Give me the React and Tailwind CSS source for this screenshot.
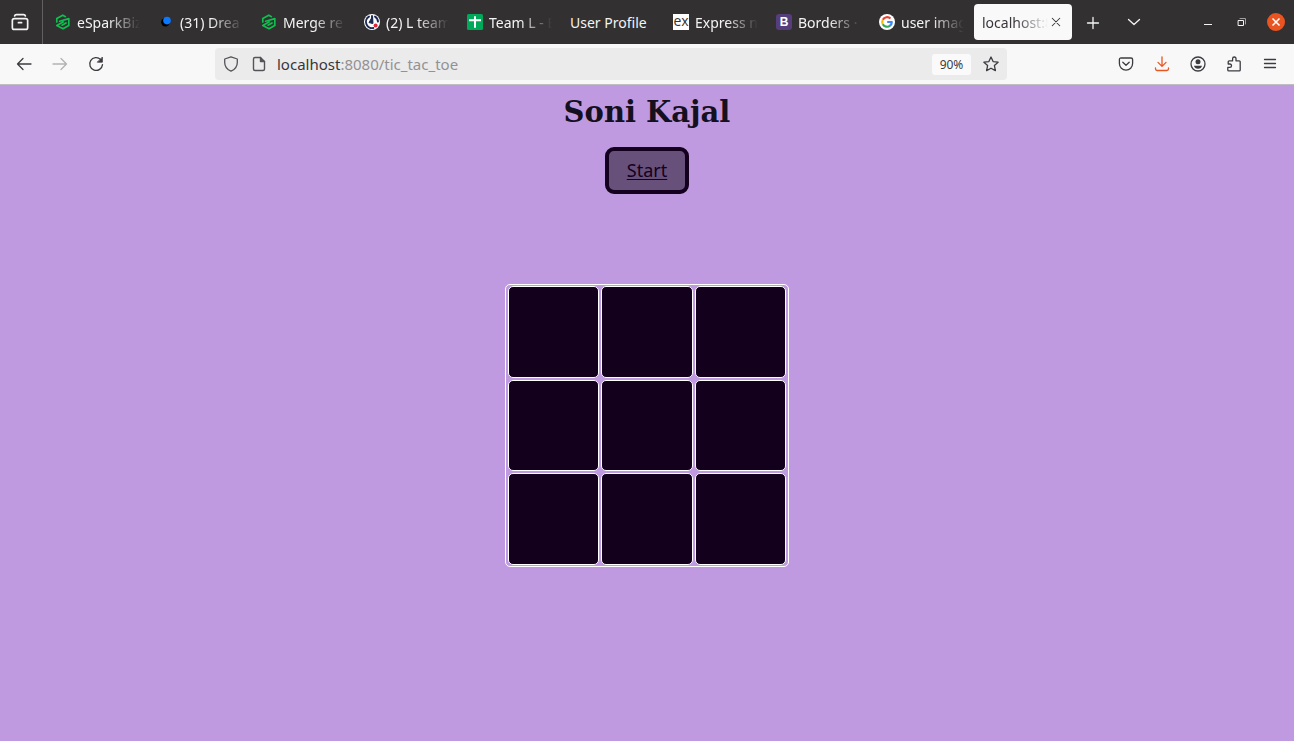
import React from "react";

const stroke = { fill: "none", stroke: "currentColor", strokeLinecap: "round", strokeLinejoin: "round" };

function Icon({ size = 16, width = 1.3, children, className = "" }) {
  return (
    <svg width={size} height={size} viewBox="0 0 16 16" strokeWidth={width} {...stroke} className={"block shrink-0 " + className} aria-hidden="true">
      {children}
    </svg>
  );
}

const HexMark = () => (
  <Icon width={1.7} className="text-[#0fbf4f]">
    <path d="M1.800 8V4.600L7.800 1.200l2.600 1.500M4.600 7.200 13.800 4.600v6.800L8 14.800l-6.200-3.400 6.600-3.600M7 11.200l4-2.200" />
  </Icon>
);

const BlueDot = () => (
  <Icon>
    <circle cx="7.4" cy="8.2" r="4.2" fill="#000" stroke="none" />
    <circle cx="9" cy="6.6" r="3.8" fill="#0a78ff" stroke="none" />
  </Icon>
);

const TeamMark = () => (
  <Icon>
    <circle cx="8" cy="8" r="8" fill="#fff" stroke="none" />
    <path d="M5 2.6A6.2 6.2 0 0 0 9.4 14M8 2v6.4M11 2.6A6.2 6.2 0 0 1 14 7.6" stroke="#1d2b53" strokeWidth="1.9" />
    <path d="M8.4 2.6 5 8.6l3.6.8z" fill="#1d2b53" stroke="#1d2b53" strokeWidth="1" />
    <circle cx="11.6" cy="11.4" r="2" fill="#e0283c" stroke="none" />
  </Icon>
);

const SheetMark = () => (
  <Icon>
    <rect width="16" height="16" rx="1.5" fill="#00a859" stroke="none" />
    <path d="M2 6.2h12M8 2.2v11.6" stroke="#fff" strokeWidth="2" strokeLinecap="butt" />
  </Icon>
);

const ExpressMark = () => (
  <span className="flex size-4 shrink-0 items-center justify-center bg-white pb-0.5 font-['Open_Sans',sans-serif] text-[14px] leading-4 text-[#333]">ex</span>
);

const BootstrapMark = () => (
  <span className="flex size-4 shrink-0 items-center justify-center rounded-[3px] bg-[#563d7c] font-['Liberation_Sans',sans-serif] text-[12px] font-bold leading-4 text-white">B</span>
);

const GoogleMark = () => (
  <Icon>
    <circle cx="8" cy="8" r="8" fill="#fff" stroke="none" />
    <g strokeWidth="2.2" strokeLinecap="butt">
      <path d="M11.5 4.6A4.8 4.8 0 0 0 3.8 5.8" stroke="#ea4335" />
      <path d="M3.8 5.7a4.8 4.8 0 0 0 0 4.6" stroke="#fbbc05" />
      <path d="M3.8 10.2a4.8 4.8 0 0 0 7.3 1.4" stroke="#34a853" />
      <path d="M11 11.7A4.8 4.8 0 0 0 12.8 8H8.2" stroke="#4285f4" />
    </g>
  </Icon>
);

const tabs = [
  { label: "eSparkBiz", mark: HexMark },
  { label: "(31) Drea", mark: BlueDot },
  { label: "Merge re", mark: HexMark },
  { label: "(2) L team", mark: TeamMark },
  { label: "Team L - E", mark: SheetMark },
  { label: "User Profile" },
  { label: "Express n", mark: ExpressMark },
  { label: "Borders ·", mark: BootstrapMark },
  { label: "user imag", mark: GoogleMark },
];

const fade = "[mask-image:linear-gradient(to_left,transparent,black_32px)]";

function Tab({ label, mark: Mark }) {
  return (
    <button type="button" role="tab" aria-selected="false" className="flex h-9 w-[99px] min-w-0 items-center gap-1.5 pl-2 pr-1.5 text-[#f4f4f4]">
      {Mark && <Mark />}
      <span className={"min-w-0 flex-1 overflow-hidden whitespace-nowrap pt-0.5 text-left " + (Mark ? fade : "")}>{label}</span>
    </button>
  );
}

function TabStrip() {
  return (
    <div className="flex h-11 items-center bg-[#333031] text-[#f4f4f4]">
      <button type="button" aria-label="Recent tabs" className="flex h-11 w-[43px] shrink-0 items-center justify-center border-r border-[#626061] pr-0.5">
        <Icon width={1.5} size={18}>
          <rect x="1.2" y="5" width="13.6" height="9.6" rx="1.8" />
          <path d="M3.2 2.6q.3-1.2 1.6-1.2h6.4q1.3 0 1.6 1.2M6.6 8.6h2.8" />
        </Icon>
      </button>
      <div role="tablist" className="flex min-w-0 gap-1 pl-1">
        {tabs.map((t) => <Tab key={t.label} {...t} />)}
        <div className="flex h-9 w-[98px] min-w-0 items-center gap-0.5 rounded bg-[#f9f9fa] pl-2 pr-2.5 text-[#38363a]">
          <button type="button" role="tab" aria-selected="true" className={"min-w-0 flex-1 overflow-hidden whitespace-nowrap pt-0.5 text-left " + fade}>localhost:8</button>
          <button type="button" aria-label="Close tab" className="shrink-0">
            <Icon size={12} width={1.4}><path d="m3 3 10 10M13 3 3 13" /></Icon>
          </button>
        </div>
      </div>
      <button type="button" aria-label="New tab" className="flex h-9 w-[41px] shrink-0 items-center justify-center pt-px">
        <Icon><path d="M8 2.5v11M2.5 8h11" /></Icon>
      </button>
      <button type="button" aria-label="List all tabs" className="flex h-9 w-[41px] shrink-0 items-center justify-center">
        <Icon><path d="m2.5 5.5 5.5 5 5.5-5" /></Icon>
      </button>
      <div className="ml-auto flex shrink-0 pr-px">
        <button type="button" aria-label="Minimize" className="flex h-9 w-[34px] items-center justify-center">
          <Icon width={1}><path d="M4 10.5h8" strokeLinecap="butt" /></Icon>
        </button>
        <button type="button" aria-label="Restore" className="flex h-9 w-[34px] items-center justify-center">
          <Icon width={1}>
            <path d="M6 4.5h5.5V10" stroke="#a0a0a0" />
            <rect x="4.5" y="6.5" width="5" height="5" />
          </Icon>
        </button>
        <button type="button" aria-label="Close window" className="flex h-9 w-[34px] items-center justify-center">
          <span className="flex size-[18px] items-center justify-center rounded-full bg-[#e95420] text-white">
            <Icon size={14} width={1.8}><path d="m4 4 8 8M12 4l-8 8" strokeLinecap="butt" /></Icon>
          </span>
        </button>
      </div>
    </div>
  );
}

function ToolButton({ label, className = "", children, ...rest }) {
  return (
    <button type="button" aria-label={label} className={"flex h-9 w-9 shrink-0 items-center justify-center " + className} {...rest}>
      {children}
    </button>
  );
}

function Toolbar() {
  return (
    <div className="grid h-[41px] grid-cols-[215fr_792fr_287fr] items-center border-b border-[#bfbdc2] bg-[#f8f8f8] text-[#3d3b40]">
      <div className="flex pl-1.5">
        <ToolButton label="Back"><Icon><path d="M15 8H1.5M7 2.5 1.5 8 7 13.5" /></Icon></ToolButton>
        <ToolButton label="Forward" disabled className="text-[#b3b3b3]"><Icon><path d="M1 8h13.5M9 2.5 14.5 8 9 13.5" /></Icon></ToolButton>
        <ToolButton label="Reload">
          <Icon>
            <path d="M12.6 3.4A6.4 6.4 0 1 0 14.5 8.6" />
            <path d="M14.4 1.4v4.8H9.6z" fill="currentColor" strokeWidth="0.8" />
          </Icon>
        </ToolButton>
      </div>
      <div className="flex h-8 min-w-0 items-center rounded bg-[#ebebeb] px-2">
        <button type="button" aria-label="Tracking protection" className="text-[#55535a]">
          <Icon><path d="M8 .8 14.3 3v3.4c0 3.6-2.4 7-6.3 8.8-3.9-1.8-6.3-5.2-6.3-8.8V3z" /></Icon>
        </button>
        <button type="button" aria-label="Site information" className="ml-3 text-[#55535a]">
          <Icon width={1.4}>
            <path d="M9.5 1.5H4Q2.5 1.5 2.5 3v10q0 1.5 1.5 1.5h8q1.5 0 1.5-1.5V5.5z" />
            <path d="M9.5 1.5v4h4" fill="currentColor" />
          </Icon>
        </button>
        <a href="http://localhost:8080/tic_tac_toe" className="ml-2.5 flex-1 truncate text-[15px] leading-5 text-[#38363a]">
          localhost<span className="text-[#939195]">:8080/tic_tac_toe</span>
        </a>
        <button type="button" aria-label="Reset zoom level" className="h-[21px] w-[39px] rounded-[3px] bg-[#fafafa] pt-px text-center text-[12px] leading-5">90%</button>
        <button type="button" aria-label="Bookmark this page" className="ml-3">
          <Icon><path d="m8 1 2.1 4.6 5 .6-3.7 3.4 1 5L8 12.2l-4.400 2.400 1-5L.9 6.200l5-.6z" /></Icon>
        </button>
      </div>
      <div className="flex justify-end pr-1.5">
        <ToolButton label="Save to Pocket">
          <Icon width={1.3}><path d="M3 2h10q1.600 0 1.600 1.600V7.500a6.600 6.600 0 0 1-13.200 0V3.600Q1.400 2 3 2zM4.800 6.200 8 9.200l3.200-3" /></Icon>
        </ToolButton>
        <ToolButton label="Downloads" className="text-[#e95420]">
          <Icon width={1.3}><path d="M8 .8v9.400M4 6.400l4 4 4-4M1.500 12v.8q0 1.700 1.700 1.700h9.600q1.700 0 1.700-1.700V12" /></Icon>
        </ToolButton>
        <ToolButton label="Account">
          <Icon width={1.3}>
            <circle cx="8" cy="8" r="7" />
            <circle cx="8" cy="5.800" r="2.500" fill="currentColor" stroke="none" />
            <path d="M4 9.800h8q-.6 3-4 3t-4-3z" fill="currentColor" stroke="none" />
          </Icon>
        </ToolButton>
        <ToolButton label="Extensions">
          <Icon width={1.3}>
            <path d="M2.800 14.900h10.400q1 0 1-1V5.800q0-1-1-1H10V2.800Q10 1 8.300 1T6.600 2.800v2H3.200q-1 0-1 1V8h1.600q1.700 0 1.700 1.700t-1.700 1.700H1.800v2.500q0 1 1 1z" />
          </Icon>
        </ToolButton>
        <ToolButton label="Application menu">
          <Icon width={1.3}><path d="M2.5 3.500h11M2.500 7.500h11M2.500 11.500h11" /></Icon>
        </ToolButton>
      </div>
    </div>
  );
}

function Board() {
  return (
    <div className="mt-[90px] grid h-[283px] w-[284px] grid-cols-3 grid-rows-3 gap-0.5 rounded-[5px] border border-white px-0.5 py-px">
      {Array.from({ length: 9 }, (_, i) => (
        <button key={i} type="button" aria-label={"Square " + (i + 1)} className="rounded-[5px] border border-white bg-[#12001c]" />
      ))}
    </div>
  );
}

export default function App() {
  return (
    <div className="flex min-h-screen flex-col bg-[#c09ae0] font-['Noto_Sans',sans-serif] text-[14px] leading-5">
      <header>
        <TabStrip />
        <Toolbar />
      </header>
      <main className="flex flex-1 flex-col items-center pt-[9px]">
        <h1 className="font-['DejaVu_Serif',serif] text-[29px] font-bold leading-9 text-[#14101f]">Soni Kajal</h1>
        <a href="#board" className="mt-[17px] rounded-[9px] border-4 border-[#14001e] bg-[#675079] px-[18px] py-2 text-[18px] leading-[23px] text-[#14001e] underline underline-offset-2">Start</a>
        <div id="board"><Board /></div>
      </main>
    </div>
  );
}
